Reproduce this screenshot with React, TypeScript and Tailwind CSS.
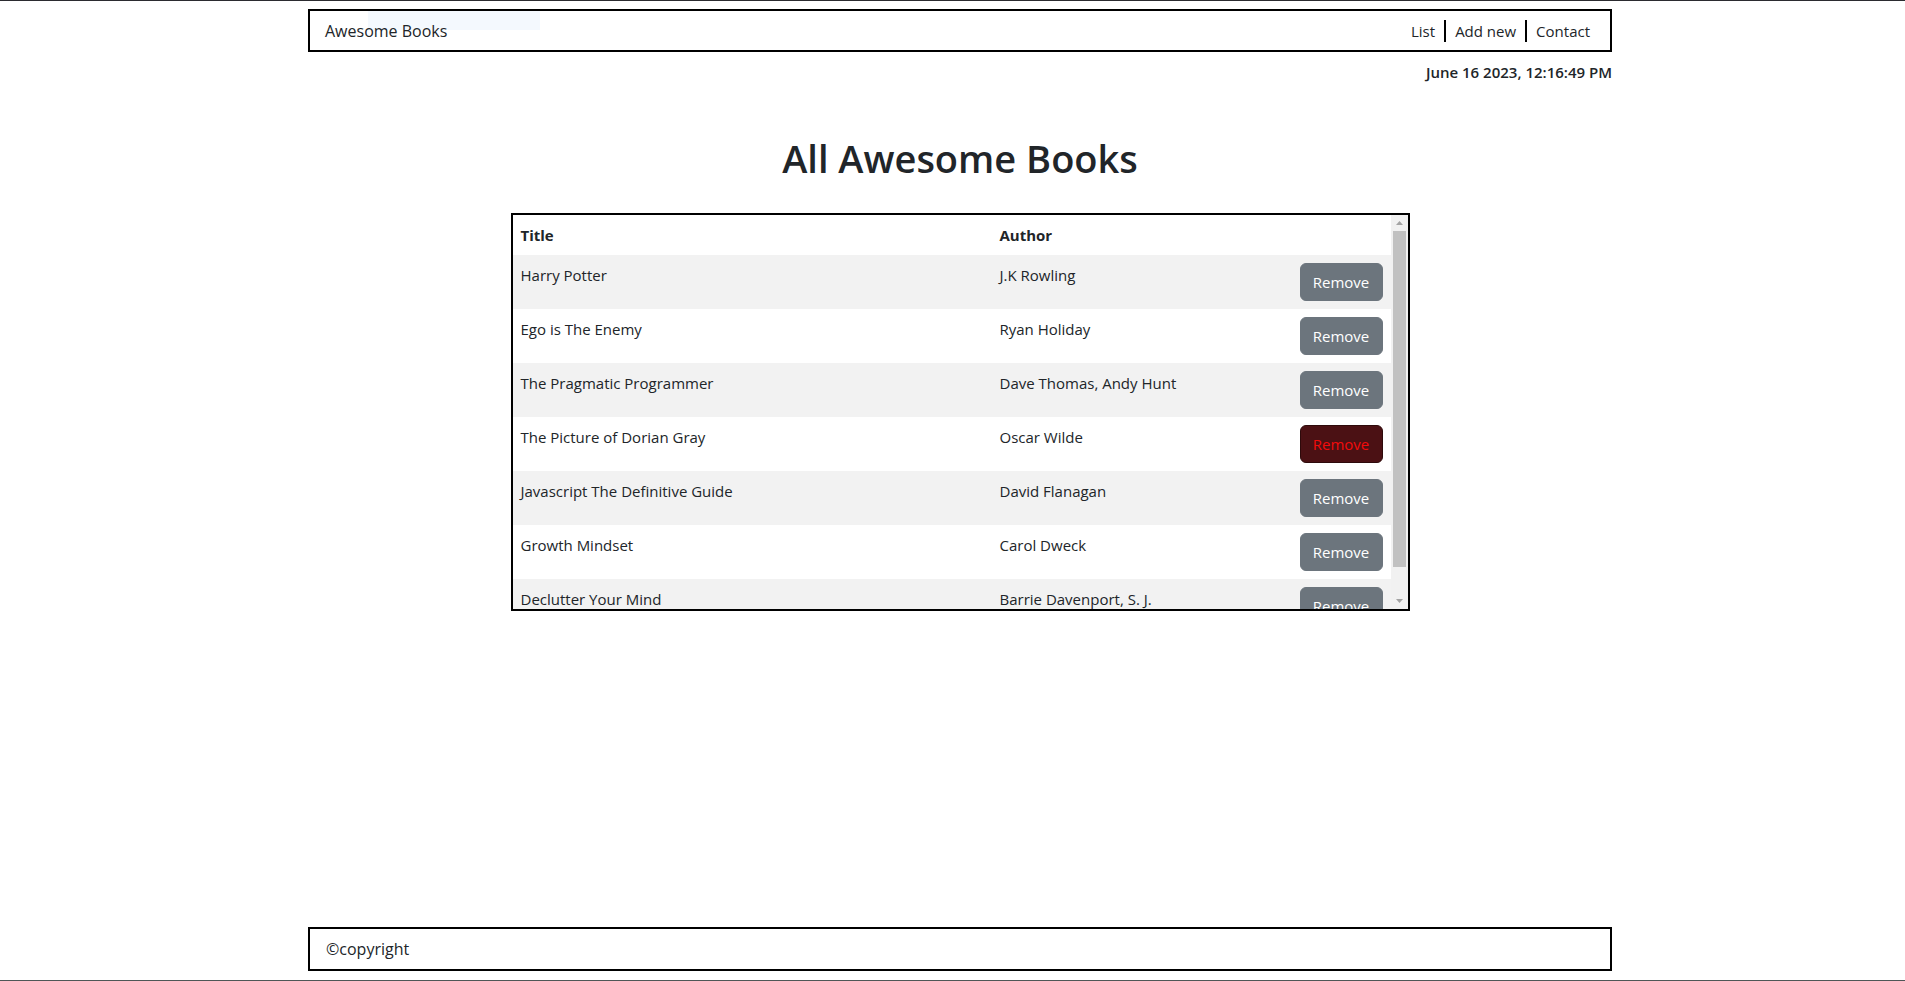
import React from "react";

type Book = { title: string; author: string };

const books: Book[] = [
  { title: "Harry Potter", author: "J.K Rowling" },
  { title: "Ego is The Enemy", author: "Ryan Holiday" },
  { title: "The Pragmatic Programmer", author: "Dave Thomas, Andy Hunt" },
  { title: "The Picture of Dorian Gray", author: "Oscar Wilde" },
  { title: "Javascript The Definitive Guide", author: "David Flanagan" },
  { title: "Growth Mindset", author: "Carol Dweck" },
  { title: "Declutter Your Mind", author: "Barrie Davenport, S. J." },
];

const font = "font-['Segoe_UI','Open_Sans',sans-serif]";

function Arrow({ down }: { down?: boolean }) {
  return (
    <div className="h-[16px] flex items-center justify-center">
      <svg width="7" height="4" viewBox="0 0 7 4">
        {down ? (
          <polygon points="0,0 7,0 3.5,4" fill="#a3a3a3" />
        ) : (
          <polygon points="0,4 7,4 3.5,0" fill="#a3a3a3" />
        )}
      </svg>
    </div>
  );
}

export default function App() {
  return (
    <div
      className={`relative h-[981px] w-full overflow-hidden bg-white text-[#212529] ${font} flex flex-col border-t border-t-[#2b2b30] border-b border-b-[#4e5656] pl-[15px]`}
    >
      {/* faint snip tool ghost */}
      <div className="absolute left-[368px] top-[10px] w-[172px] h-[19px] bg-[#f4f9fe]" />

      {/* Navbar */}
      <nav className="relative mx-auto mt-2 w-[1304px] h-[43px] border-2 border-black flex items-center justify-between pl-[15px] pr-[20px]">
        <span className="text-[16px]">Awesome Books</span>
        <ul className="flex items-center text-[15px]">
          <li className="px-[9px] leading-[22px] border-r-2 border-black">List</li>
          <li className="px-[9px] leading-[22px] border-r-2 border-black">Add new</li>
          <li className="pl-[9px] leading-[22px]">Contact</li>
        </ul>
      </nav>

      {/* Date */}
      <div className="mx-auto w-[1304px] mt-2 text-right text-[15px] font-semibold leading-6">
        June 16 2023, 12:16:49 PM
      </div>

      {/* Heading */}
      <h1 className="mt-[50px] mb-[31px] text-center text-[38px] font-semibold leading-[48px]">
        All Awesome Books
      </h1>

      {/* Book list */}
      <div className="mx-auto w-[899px] h-[398px] border-2 border-black flex">
        <div className="flex-1 overflow-hidden">
          <table className="w-full border-collapse text-[15px] table-fixed">
            <colgroup>
              <col className="w-[479px]" />
              <col className="w-[300px]" />
              <col className="w-[99px]" />
            </colgroup>
            <thead>
              <tr>
                <th className="text-left font-bold px-2 py-2 leading-6">Title</th>
                <th className="text-left font-bold px-2 py-2 leading-6">Author</th>
                <th className="px-2 py-2" />
              </tr>
            </thead>
            <tbody>
              {books.map((b, i) => {
                const striped = i % 2 === 0;
                const hovered = i === 3;
                return (
                  <tr key={b.title} className={striped ? "bg-[#f2f2f2]" : "bg-white"}>
                    <td className="align-top px-2 pt-2 leading-6">{b.title}</td>
                    <td className="align-top px-2 pt-2 leading-6">{b.author}</td>
                    <td className="align-top px-2 py-2 text-right">
                      <button
                        className={`h-[38px] w-[83px] rounded-[6px] border text-[15px] leading-6 ${
                          hovered
                            ? "bg-[#4b1114] border-[#2e0a0b] text-[#f20b0b]"
                            : "bg-[#6c757d] border-[#6c757d] text-white"
                        }`}
                      >
                        Remove
                      </button>
                    </td>
                  </tr>
                );
              })}
            </tbody>
          </table>
        </div>
        {/* scrollbar */}
        <div className="w-[17px] bg-[#f1f1f1] flex flex-col">
          <Arrow />
          <div className="flex-1">
            <div className="mx-[2px] h-[336px] bg-[#c1c1c1]" />
          </div>
          <Arrow down />
        </div>
      </div>

      {/* Footer */}
      <footer className="mx-auto mt-auto mb-[9px] w-[1304px] h-[44px] border-2 border-black flex items-center pl-[16px]">
        <span className="text-[16px]">©copyright</span>
      </footer>
    </div>
  );
}
